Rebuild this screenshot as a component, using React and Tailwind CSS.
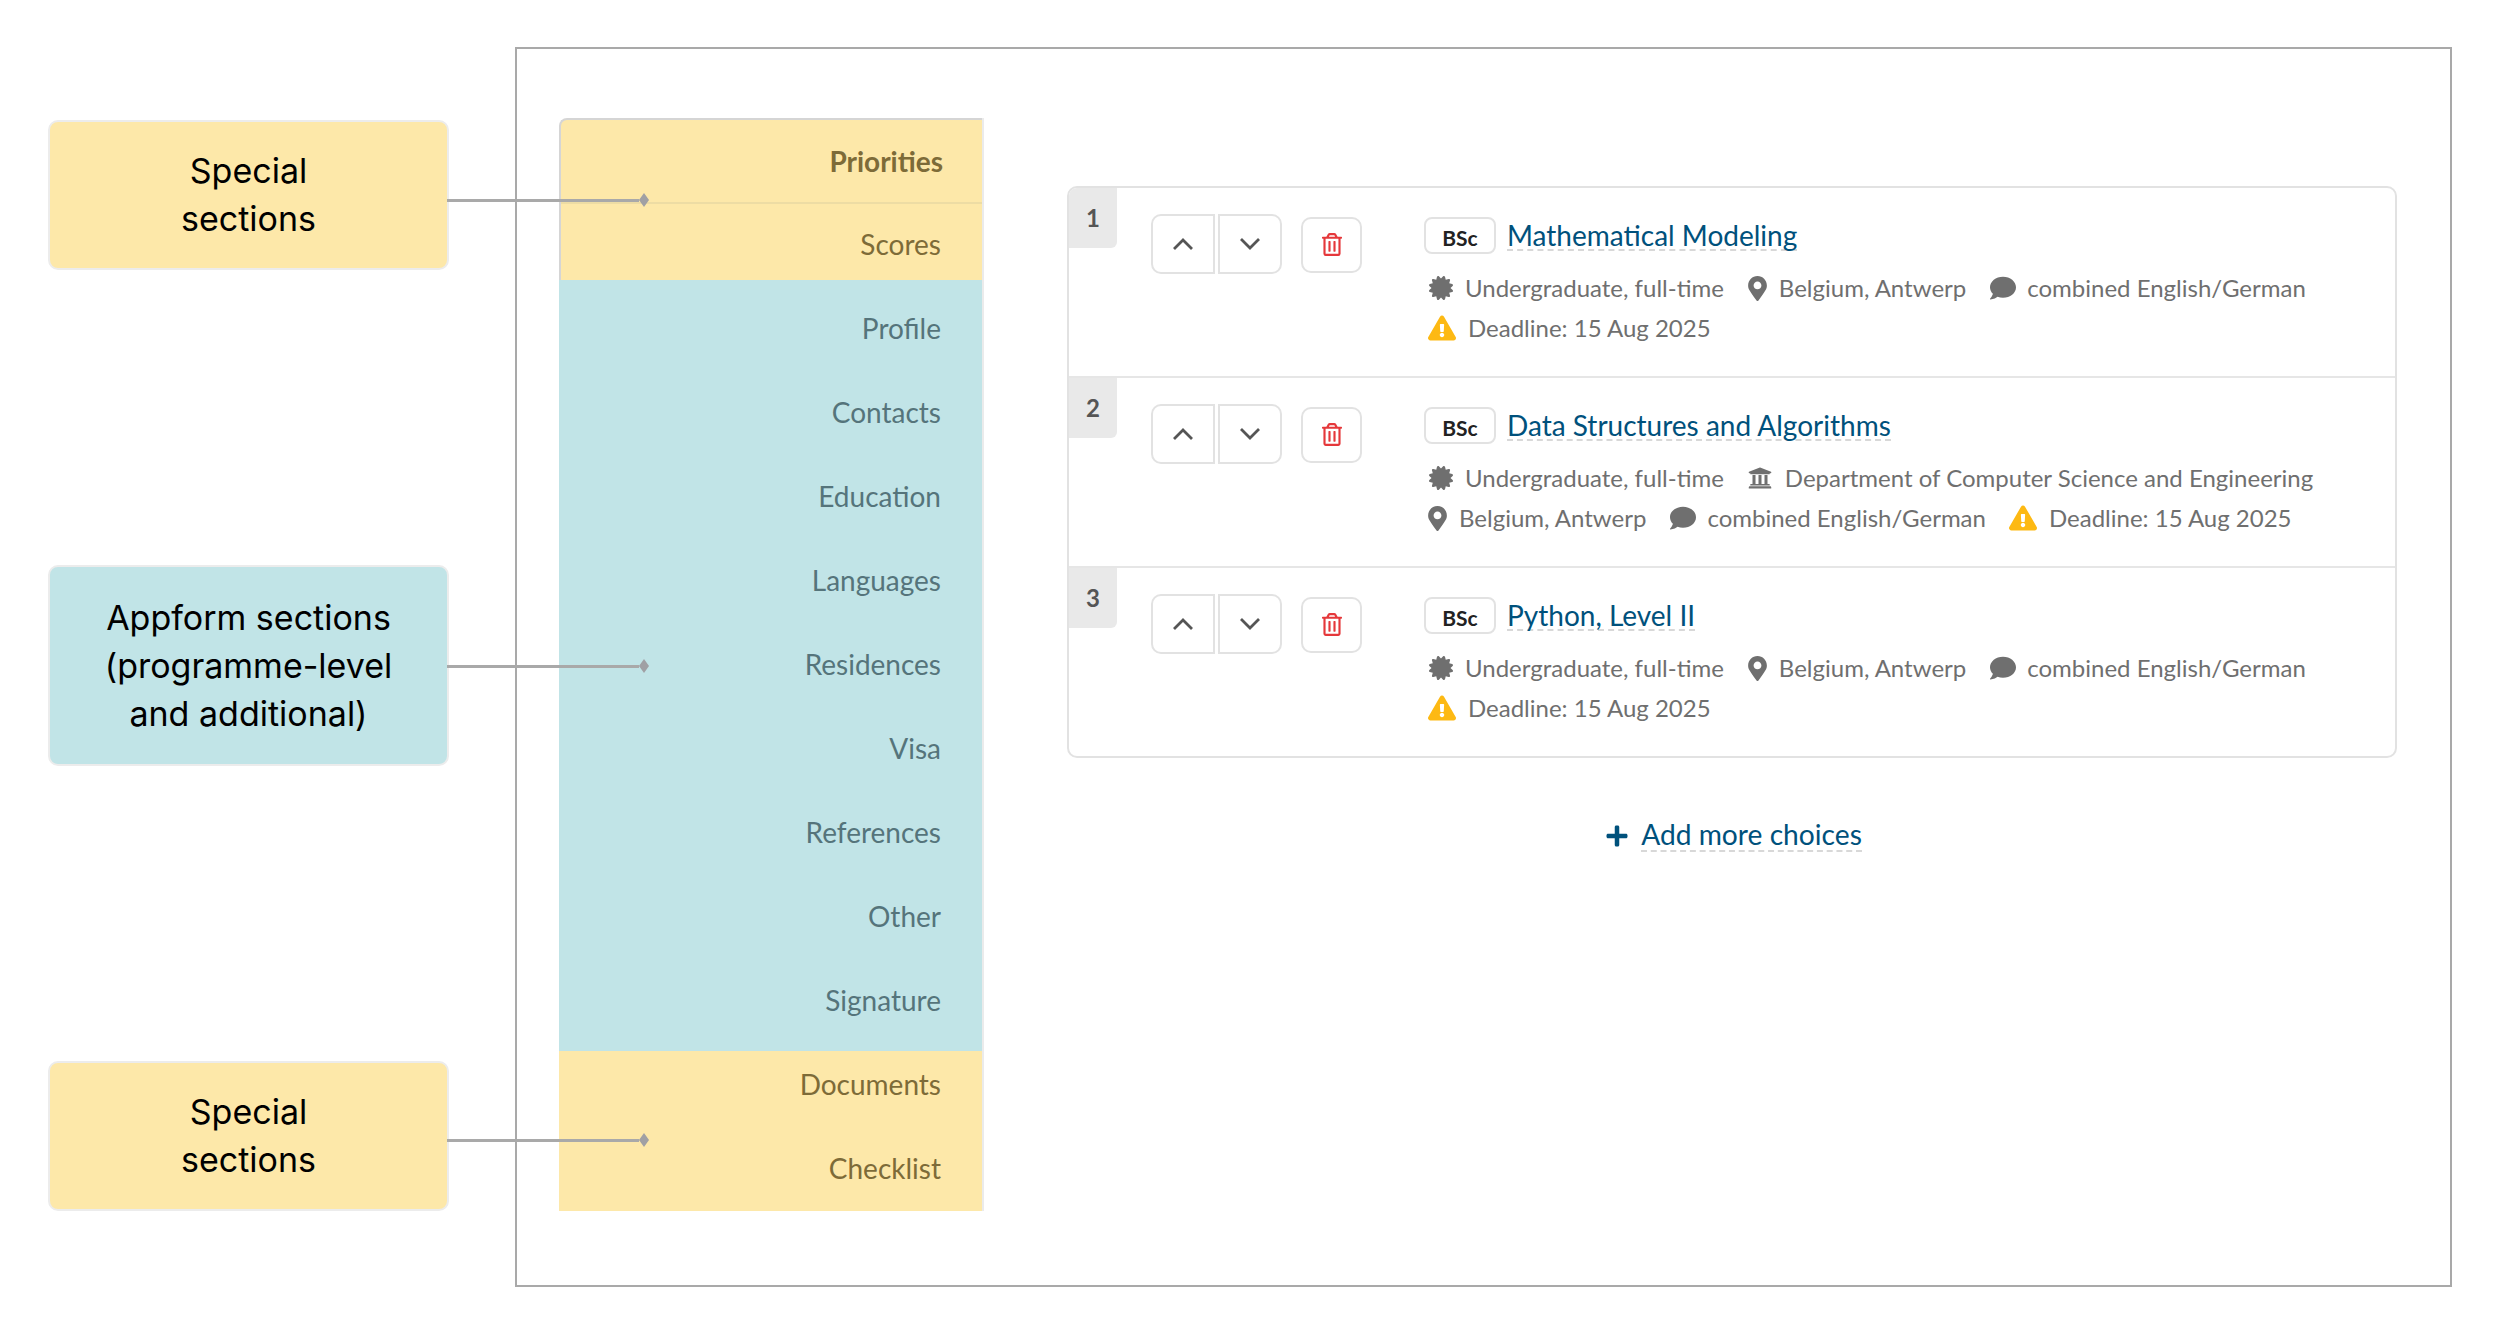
import {
  FaCertificate,
  FaComment,
  FaExclamationTriangle,
  FaMapMarkerAlt,
  FaPlus,
  FaRegTrashAlt,
  FaUniversity,
} from "react-icons/fa";

const level = { key: "level", text: "Undergraduate, full-time" };
const place = { key: "place", text: "Belgium, Antwerp" };
const lang = { key: "lang", text: "combined English/German" };
const dept = { key: "dept", text: "Department of Computer Science and Engineering" };
const deadline = { key: "deadline", text: "Deadline: 15 Aug 2025" };

const choices = [
  { n: 1, title: "Mathematical Modeling", meta: [level, place, lang, deadline] },
  { n: 2, title: "Data Structures and Algorithms", meta: [level, dept, place, lang, deadline] },
  { n: 3, title: "Python, Level II", meta: [level, place, lang, deadline] },
];

function MetaIcon({ type }) {
  if (type === "level") return <FaCertificate className="w-[24px] h-[24px] ml-[1px] mr-[12px] text-[#6f6f6f]" />;
  if (type === "place") return <FaMapMarkerAlt className="w-[19px] h-[25px] mr-[12px] text-[#6f6f6f]" />;
  if (type === "lang") return <FaComment className="w-[26px] h-[26px] ml-[5px] mr-[11px] text-[#6f6f6f]" />;
  if (type === "dept") return <FaUniversity className="w-[24px] h-[24px] mr-[13px] text-[#6f6f6f]" />;
  return <FaExclamationTriangle className="w-[28px] h-[26px] mr-[12px] text-[#fdb913]" />;
}

function Chevron({ up }) {
  return (
    <svg viewBox="0 0 22 12" className="w-[22px] h-[12px]" fill="none" stroke="currentColor" strokeWidth="2.8">
      <path d={up ? "M2 11 L11 2 L20 11" : "M2 1 L11 10 L20 1"} />
    </svg>
  );
}

function Label({ children, color, lineTop }) {
  return (
    <div className={`relative w-[401px] flex items-center justify-center rounded-[10px] border-2 border-[#ececec] text-center font-[Inter,sans-serif] text-[34px] leading-[48px] text-black ${color}`}>
      {children}
      <div className={`absolute left-full flex items-center w-[202px] ${lineTop}`}>
        <div className="h-[3px] flex-1 bg-[#a9a9a9]" />
        <div className="h-[14px] w-[10px] bg-[#a0a0a4] [clip-path:polygon(50%_0,100%_50%,50%_100%,0_50%)]" />
      </div>
    </div>
  );
}

function NavRow({ children, bold, className = "" }) {
  return (
    <div className={`flex items-center justify-end text-[28px] ${bold ? "font-bold" : ""} ${className}`}>
      {children}
    </div>
  );
}

function Choice({ item, last }) {
  return (
    <div className={`flex items-start ${last ? "h-[188px]" : "h-[190px] border-b-2 border-[#e6e6e6]"}`}>
      <div className="w-[48px] h-[60px] shrink-0 flex items-center justify-center rounded-br-[6px] bg-[#e9e9e9] text-[24px] font-bold text-[#555]">
        {item.n}
      </div>
      <div className="flex items-start ml-[34px] mt-[26px]">
        <button className="w-[64px] h-[60px] flex items-center justify-center rounded-l-[10px] border-2 border-[#e2e2e2] text-[#555]">
          <Chevron up />
        </button>
        <button className="w-[64px] h-[60px] ml-[3px] flex items-center justify-center rounded-r-[10px] border-2 border-[#e2e2e2] text-[#555]">
          <Chevron />
        </button>
        <button className="w-[61px] h-[56px] ml-[19px] mt-[3px] flex items-center justify-center rounded-[10px] border-2 border-[#e2e2e2] text-[#e5383b] pb-[2px]">
          <FaRegTrashAlt className="w-[20px] h-[23px]" />
        </button>
      </div>
      <div className="ml-[62px] mt-[29px] w-[920px]">
        <div className="flex items-start h-[37px]">
          <div className="w-[72px] h-[37px] flex items-center justify-center rounded-[8px] border-2 border-[#e2e2e2] text-[21px] font-bold text-[#222] pt-[4px]">
            BSc
          </div>
          <div className="ml-[11px] mt-[3px] h-[31px] leading-[30px] text-[28px] text-[#00517c] border-b-2 border-dashed border-[#d8d8d8]">
            {item.title}
          </div>
        </div>
        <div className="mt-[14px] pl-[4px] flex flex-wrap items-center gap-x-[19px] text-[24px] text-[#6f6f6f]">
          {item.meta.map((m) => (
            <div
              key={m.key}
              className={`flex items-center h-[40px] ${m.key === "lang" ? "pr-[4px]" : ""} ${m.key === "level" ? "pr-[5px]" : ""}`}
            >
              <MetaIcon type={m.key} />
              {m.text}
            </div>
          ))}
        </div>
      </div>
    </div>
  );
}

export default function App() {
  return (
    <div className="w-[2500px] h-[1333px] flex pl-[48px] pt-[47px] bg-white overflow-hidden font-[Lato,sans-serif]">
      {/* labels */}
      <div className="w-[467px] shrink-0 flex flex-col pt-[73px]">
        <Label color="bg-[#fde8a9] h-[150px]" lineTop="top-[71px]">
          Special
          <br />
          sections
        </Label>
        <Label color="bg-[#c1e4e7] h-[201px] mt-[295px]" lineTop="top-[92px]">
          Appform sections
          <br />
          (programme-level
          <br />
          and additional)
        </Label>
        <Label color="bg-[#fde8a9] h-[150px] mt-[295px]" lineTop="top-[70px]">
          Special
          <br />
          sections
        </Label>
      </div>

      {/* screen */}
      <div className="w-[1937px] h-[1240px] shrink-0 flex border-2 border-[#a9a9a9]">
        <div className="w-[425px] h-[1093px] ml-[42px] mt-[69px] shrink-0 flex flex-col border-r-2 border-[#00000014]">
          <div className="h-[162px] bg-[#fde8a9] text-[#7d6b38] rounded-tl-[8px] border-t-2 border-l-2 border-[#d5d5d5]">
            <NavRow bold className="h-[84.2px] pr-[39px] border-b-2 border-[#eddca4]">Priorities</NavRow>
            <NavRow className="h-[84.2px] pr-[41px] mt-[-2px]">Scores</NavRow>
          </div>
          <div className="h-[771px] pt-[6px] pr-[41px] bg-[#c1e4e7] text-[#55747b]">
            {["Profile", "Contacts", "Education", "Languages", "Residences", "Visa", "References", "Other", "Signature"].map((s) => (
              <NavRow key={s} className="h-[84px]">{s}</NavRow>
            ))}
          </div>
          <div className="h-[160px] pr-[41px] bg-[#fde8a9] text-[#7d6b38]">
            <NavRow className="h-[84.2px] mt-[-9px]">Documents</NavRow>
            <NavRow className="h-[84.2px]">Checklist</NavRow>
          </div>
        </div>

        <div className="ml-[83px] mt-[137px] w-[1330px]">
          <div className="rounded-[10px] border-2 border-[#e2e2e2] overflow-hidden">
            {choices.map((c, i) => (
              <Choice key={c.n} item={c} last={i === choices.length - 1} />
            ))}
          </div>
          <div className="mt-[61px] pl-[3px] flex items-center justify-center text-[28.2px] text-[#00517c]">
            <FaPlus className="w-[24px] h-[24px] mr-[12px]" />
            <span className="h-[33px] leading-[31px] border-b-2 border-dashed border-[#d8d8d8]">Add more choices</span>
          </div>
        </div>
      </div>
    </div>
  );
}
